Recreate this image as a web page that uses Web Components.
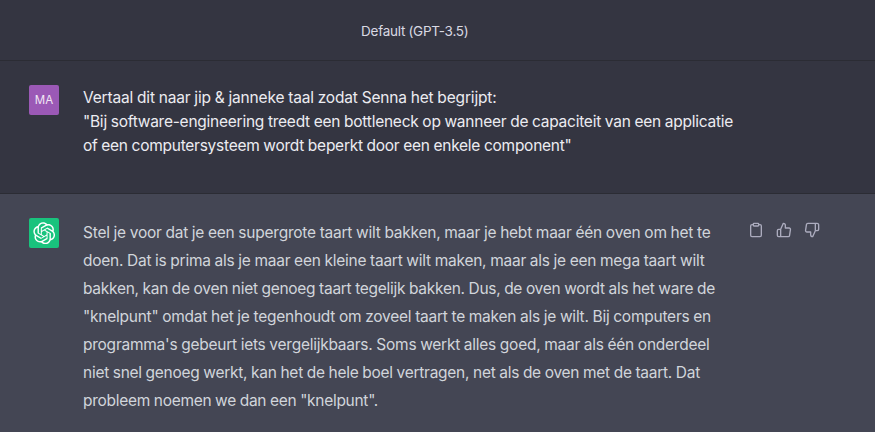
<!DOCTYPE html>
<html lang="nl">
<head>
<meta charset="utf-8">
<title>Chat</title>
<style>
html,body{margin:0;height:100%;overflow:hidden;background:#444654}
body{font-family:Inter,"Liberation Sans",Arial,sans-serif;font-size:15.5px}
</style>
</head>
<body>
<chat-thread></chat-thread>
<script>
const define = (name, html, ready) => customElements.define(name, class extends HTMLElement {
  constructor() {
    super();
    this.attachShadow({mode: "open"}).innerHTML = html;
  }
  connectedCallback() { if (ready) ready(this); }
});

/* One line of text, tracked so that it spans the width given in its "span" attribute. */
define("text-line", `<style>:host{display:block;white-space:nowrap;word-spacing:-.3px}</style><span><slot></slot></span>`, el => {
  const span = el.shadowRoot.querySelector("span");
  const extra = +el.getAttribute("span") - span.getBoundingClientRect().width;
  span.style.letterSpacing = extra / el.textContent.length + "px";
});

define("model-header", `<style>
:host{display:flex;box-sizing:border-box;height:61px;padding:19px 0 0 361px;background:#343541;border-bottom:1px solid #2b2c34;color:#d9d9e3;font-size:13.5px;line-height:24px}
</style><slot></slot>`);

define("user-avatar", `<style>
:host{display:flex;align-items:center;justify-content:center;width:30px;height:30px;border-radius:2px;background:#9b59b6;color:#f0e6f4;font:11.5px/30px Inter,sans-serif}
</style><slot></slot>`);

define("bot-avatar", `<style>
:host{display:flex;align-items:center;justify-content:center;width:30px;height:30px;border-radius:2px;background:#19c37d;color:#fff}
svg{width:22.5px;height:22.5px;display:block}
</style><svg viewBox="0 0 41 41" fill="currentColor"><path d="M37.5324 16.8707C37.9808 15.5241 38.1363 14.0974 37.9886 12.6859C37.8409 11.2744 37.3934 9.91076 36.676 8.68622C35.6126 6.83404 33.9882 5.3676 32.0373 4.4985C30.0864 3.62941 27.9098 3.40259 25.8215 3.85078C24.8796 2.7893 23.7219 1.94125 22.4257 1.36341C21.1295 0.785575 19.7249 0.491269 18.3058 0.500197C16.1708 0.495044 14.0893 1.16803 12.3614 2.42214C10.6335 3.67624 9.34853 5.44666 8.6917 7.47815C7.30085 7.76286 5.98686 8.3414 4.8377 9.17505C3.68854 10.0087 2.73073 11.0782 2.02839 12.312C0.956464 14.1591 0.498905 16.2988 0.721698 18.4228C0.944492 20.5467 1.83612 22.5449 3.268 24.1293C2.81966 25.4759 2.66413 26.9026 2.81182 28.3141C2.95951 29.7256 3.40701 31.0892 4.12437 32.3138C5.18791 34.1659 6.8123 35.6322 8.76321 36.5013C10.7141 37.3704 12.8907 37.5973 14.9789 37.1492C15.9208 38.2107 17.0786 39.0587 18.3747 39.6366C19.6709 40.2144 21.0755 40.5087 22.4946 40.4998C24.6307 40.5054 26.7133 39.8321 28.4418 38.5772C30.1704 37.3223 31.4556 35.5506 32.1119 33.5179C33.5027 33.2332 34.8167 32.6547 35.9659 31.821C37.115 30.9874 38.0728 29.9178 38.7752 28.684C39.8458 26.8371 40.3023 24.6979 40.0789 22.5748C39.8556 20.4517 38.9639 18.4544 37.5324 16.8707ZM22.4978 37.8849C20.7443 37.8874 19.0459 37.2733 17.6994 36.1501C17.7601 36.117 17.8666 36.0586 17.936 36.0161L25.9004 31.4156C26.1003 31.3019 26.2663 31.137 26.3813 30.9378C26.4964 30.7386 26.5563 30.5124 26.5549 30.2825V19.0542L29.9213 20.998C29.9389 21.0068 29.9541 21.0198 29.9656 21.0359C29.977 21.052 29.9842 21.0707 29.9867 21.0902V30.3889C29.9842 32.375 29.1946 34.2791 27.7909 35.6841C26.3872 37.0892 24.4838 37.8806 22.4978 37.8849ZM6.39227 31.0064C5.51397 29.4888 5.19742 27.7107 5.49804 25.9832C5.55718 26.0187 5.66048 26.0818 5.73461 26.1244L13.699 30.7248C13.8975 30.8408 14.1233 30.902 14.3532 30.902C14.583 30.902 14.8088 30.8408 15.0073 30.7248L24.731 25.1103V28.9979C24.7321 29.0177 24.7283 29.0376 24.7199 29.0556C24.7115 29.0736 24.6988 29.0893 24.6829 29.1012L16.6317 33.7497C14.9096 34.7416 12.8643 35.0097 10.9447 34.4954C9.02506 33.9811 7.38785 32.7263 6.39227 31.0064ZM4.29707 13.6194C5.17156 12.0998 6.55279 10.9364 8.19885 10.3327C8.19885 10.4013 8.19491 10.5228 8.19491 10.6071V19.808C8.19351 20.0378 8.25334 20.2638 8.36823 20.4629C8.48312 20.6619 8.64893 20.8267 8.84863 20.9404L18.5723 26.5542L15.206 28.4979C15.1894 28.5089 15.1703 28.5155 15.1505 28.5173C15.1307 28.5191 15.1107 28.516 15.0924 28.5082L7.04046 23.8557C5.32135 22.8601 4.06716 21.2235 3.55289 19.3046C3.03862 17.3858 3.30624 15.3413 4.29707 13.6194ZM31.955 20.0556L22.2312 14.4411L25.5976 12.4981C25.6142 12.4872 25.6333 12.4805 25.6531 12.4787C25.6729 12.4769 25.6928 12.4801 25.7111 12.4879L33.7631 17.1364C34.9967 17.849 36.0017 18.8982 36.6606 20.1613C37.3194 21.4244 37.6047 22.849 37.4832 24.2684C37.3617 25.6878 36.8382 27.0432 35.9743 28.1759C35.1103 29.3086 33.9415 30.1717 32.6047 30.6641C32.6047 30.5947 32.6047 30.4733 32.6047 30.3889V21.188C32.6066 20.9586 32.5474 20.7328 32.4332 20.5338C32.319 20.3348 32.154 20.1698 31.955 20.0556ZM35.3055 15.0128C35.2464 14.9765 35.1431 14.9142 35.069 14.8717L27.1045 10.2712C26.906 10.1554 26.6803 10.0943 26.4504 10.0943C26.2206 10.0943 25.9948 10.1554 25.7963 10.2712L16.0726 15.8858V11.9982C16.0715 11.9783 16.0753 11.9585 16.0837 11.9405C16.0921 11.9225 16.1048 11.9068 16.1207 11.8949L24.1719 7.25025C25.4053 6.53903 26.8158 6.19376 28.2383 6.25482C29.6608 6.31589 31.0364 6.78077 32.2044 7.59508C33.3723 8.40939 34.2842 9.53945 34.8334 10.8531C35.3826 12.1667 35.5464 13.6095 35.3055 15.0128ZM14.2424 21.9419L10.8752 19.9981C10.8576 19.9893 10.8423 19.9763 10.8309 19.9602C10.8195 19.9441 10.8122 19.9254 10.8098 19.9058V10.6071C10.8107 9.18295 11.2173 7.78848 11.9819 6.58696C12.7466 5.38544 13.8377 4.42659 15.1275 3.82264C16.4173 3.21869 17.8524 2.99464 19.2649 3.1767C20.6775 3.35876 22.0089 3.93941 23.1034 4.85067C23.0427 4.88379 22.937 4.94215 22.8668 4.98473L14.9024 9.58517C14.7025 9.69878 14.5366 9.86356 14.4215 10.0626C14.3065 10.2616 14.2466 10.4877 14.2479 10.7175L14.2424 21.9419ZM16.071 17.9991L20.4018 15.4978L24.7325 17.9975V22.9985L20.4018 25.4983L16.071 22.9985V17.9991Z"/></svg>`);

define("message-actions", `<style>
:host{display:flex;gap:12px;color:#acacbe;padding-top:4px}
svg{width:16px;height:16px;display:block;fill:none;stroke:currentColor;stroke-width:2;stroke-linecap:round;stroke-linejoin:round}
</style>
<svg viewBox="0 0 24 24"><path d="M16 4h2a2 2 0 0 1 2 2v14a2 2 0 0 1-2 2H6a2 2 0 0 1-2-2V6a2 2 0 0 1 2-2h2"/><rect x="8" y="2" width="8" height="4" rx="1"/></svg>
<svg viewBox="0 0 24 24"><path d="M14 9V5a3 3 0 0 0-3-3l-4 9v11h11.28a2 2 0 0 0 2-1.7l1.38-9a2 2 0 0 0-2-2.3zM7 22H4a2 2 0 0 1-2-2v-7a2 2 0 0 1 2-2h3"/></svg>
<svg viewBox="0 0 24 24"><path d="M10 15v4a3 3 0 0 0 3 3l4-9V2H5.72a2 2 0 0 0-2 1.7l-1.38 9a2 2 0 0 0 2 2.3zm7-13h2.67A2.31 2.31 0 0 1 22 4v7a2.31 2.31 0 0 1-2.33 2H17"/></svg>`);

define("chat-message", `<style>
:host{display:grid;grid-template-columns:30px 650px auto;column-gap:24px;justify-content:start;align-items:start;box-sizing:border-box;padding:24px 0 0 29px;height:133px;background:#343541;border-bottom:1px solid #2b2c34;color:#ececf1;line-height:24px}
:host([role=assistant]){grid-template-columns:30px 641px auto;height:auto;flex:1;border:0;background:#444654;color:#d1d5db;line-height:28px}
.body{display:block;padding-top:1px}
</style><slot name="avatar"></slot><div class="body"><slot></slot></div><slot name="actions"></slot>`);

define("chat-thread", `<style>:host{display:flex;flex-direction:column;height:100vh}</style>
<model-header><text-line span="107.5">Default (GPT-3.5)</text-line></model-header>
<chat-message role="user">
<user-avatar slot="avatar">MA</user-avatar>
<text-line span="413.5">Vertaal dit naar jip &amp; janneke taal zodat Senna het begrijpt:</text-line>
<text-line span="650">"Bij software-engineering treedt een bottleneck op wanneer de capaciteit van een applicatie</text-line>
<text-line span="488.5">of een computersysteem wordt beperkt door een enkele component"</text-line>
</chat-message>
<chat-message role="assistant">
<bot-avatar slot="avatar"></bot-avatar>
<text-line span="627.5">Stel je voor dat je een supergrote taart wilt bakken, maar je hebt maar één oven om het te</text-line>
<text-line span="621.5">doen. Dat is prima als je maar een kleine taart wilt maken, maar als je een mega taart wilt</text-line>
<text-line span="632">bakken, kan de oven niet genoeg taart tegelijk bakken. Dus, de oven wordt als het ware de</text-line>
<text-line span="628">"knelpunt" omdat het je tegenhoudt om zoveel taart te maken als je wilt. Bij computers en</text-line>
<text-line span="626.5">programma's gebeurt iets vergelijkbaars. Soms werkt alles goed, maar als één onderdeel</text-line>
<text-line span="617">niet snel genoeg werkt, kan het de hele boel vertragen, net als de oven met de taart. Dat</text-line>
<text-line span="295">probleem noemen we dan een "knelpunt".</text-line>
<message-actions slot="actions"></message-actions>
</chat-message>`);
</script>
</body>
</html>
